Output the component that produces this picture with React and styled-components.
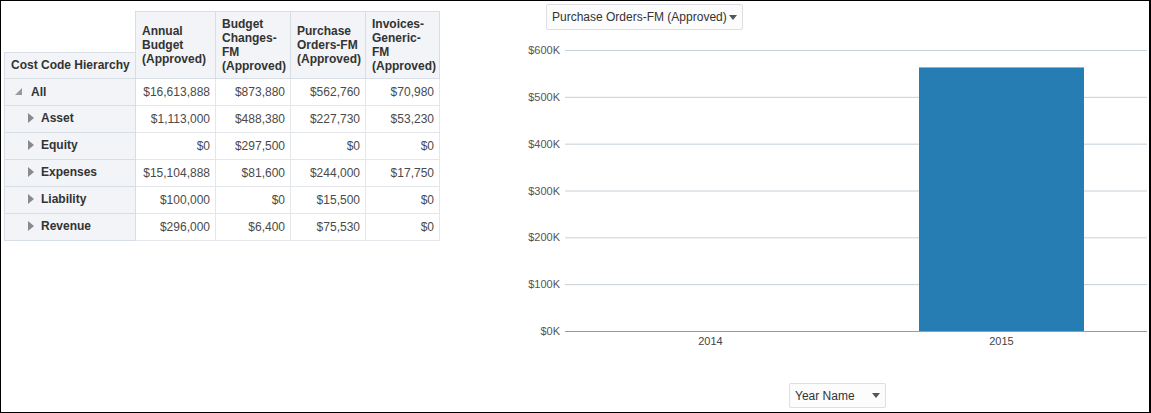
import React from "react";
import styled, { createGlobalStyle } from "styled-components";

const GlobalStyle = createGlobalStyle`
  body {
    margin: 0;
    font-family: "Liberation Sans", Arial, sans-serif;
    background: #fff;
  }
`;

const Frame = styled.div`
  box-sizing: border-box;
  width: 1151px;
  height: 413px;
  border: 1px solid #000;
  border-right-width: 2px;
  display: flex;
  flex-direction: row;
  overflow: hidden;
`;

const TablePanel = styled.div`
  flex: 0 0 489px;
  padding: 10px 0 0 3px;
  box-sizing: border-box;
`;

const Pivot = styled.table`
  border-collapse: collapse;
  table-layout: fixed;
  width: 436px;
  font-size: 12px;
  color: #333;
`;

const Corner = styled.td`
  border: none;
  padding: 0;
  height: 40px;
`;

const ColHeader = styled.th`
  background: #f2f4f8;
  border: 1px solid #d8dee5;
  text-align: left;
  vertical-align: middle;
  font-weight: bold;
  line-height: 14px;
  padding: 0 4px 0 6px;
`;

const HierHeader = styled.th`
  background: #f2f4f8;
  border: 1px solid #d8dee5;
  text-align: left;
  font-weight: bold;
  height: 25px;
  padding: 0 0 0 6px;
  white-space: nowrap;
`;

const RowHeader = styled.th`
  background: #f2f4f8;
  border: 1px solid #d8dee5;
  text-align: left;
  font-weight: bold;
  height: 26px;
  padding: 0 0 0 ${props => (props.level ? 23 : 10)}px;
`;

const Label = styled.span`
  display: inline-flex;
  align-items: center;
  gap: ${props => (props.expanded ? 9 : 7)}px;
`;

const Collapsed = styled.span`
  width: 0;
  height: 0;
  border-top: 5px solid transparent;
  border-bottom: 5px solid transparent;
  border-left: 6px solid #8a8a8a;
`;

const Expanded = styled.span`
  width: 0;
  height: 0;
  border-left: 7px solid transparent;
  border-bottom: 7px solid #9a9a9a;
`;

const Cell = styled.td`
  border: 1px solid #e3e7ec;
  text-align: right;
  padding: 0 5px 0 0;
  color: #4a4a4a;
`;

const ChartPanel = styled.div`
  flex: 1;
  min-width: 0;
  display: flex;
  flex-direction: column;
  padding-top: 3px;
`;

const Dropdown = styled.div`
  box-sizing: border-box;
  display: flex;
  align-items: center;
  justify-content: space-between;
  width: ${props => props.width}px;
  height: ${props => props.height}px;
  margin-left: ${props => props.offset}px;
  padding: 0 5px 0 5px;
  border: 1px solid #dcdfe3;
  border-radius: 2px;
  background: #fcfcfd;
  font-size: 12px;
  color: #333;
`;

const Caret = styled.span`
  width: 0;
  height: 0;
  border-left: 4px solid transparent;
  border-right: 4px solid transparent;
  border-top: 5px solid #555;
`;

const ChartSvg = styled.svg`
  display: block;
  font-family: "Liberation Sans", Arial, sans-serif;
`;

const BottomRow = styled.div`
  margin-top: 23px;
`;

const levels = [
  { name: "All", level: 0, values: ["$16,613,888", "$873,880", "$562,760", "$70,980"] },
  { name: "Asset", level: 1, values: ["$1,113,000", "$488,380", "$227,730", "$53,230"] },
  { name: "Equity", level: 1, values: ["$0", "$297,500", "$0", "$0"] },
  { name: "Expenses", level: 1, values: ["$15,104,888", "$81,600", "$244,000", "$17,750"] },
  { name: "Liability", level: 1, values: ["$100,000", "$0", "$15,500", "$0"] },
  { name: "Revenue", level: 1, values: ["$296,000", "$6,400", "$75,530", "$0"] }
];

const headers = [
  ["Annual", "Budget", "(Approved)"],
  ["Budget", "Changes-", "FM", "(Approved)"],
  ["Purchase", "Orders-FM", "(Approved)"],
  ["Invoices-", "Generic-", "FM", "(Approved)"]
];

function Chart() {
  const top = 20;
  const bottom = 301;
  const left = 75;
  const right = 657;
  const max = 600000;
  const ticks = [0, 100, 200, 300, 400, 500, 600];
  const data = [
    { year: "2014", value: 0 },
    { year: "2015", value: 562760 }
  ];
  const cat = (right - left) / data.length;
  const y = v => bottom - (v / max) * (bottom - top);

  return (
    <ChartSvg width="657" height="330">
      {ticks.map(t => (
        <g key={t}>
          <line
            x1={left}
            x2={right}
            y1={y(t * 1000) + 0.5}
            y2={y(t * 1000) + 0.5}
            stroke={t === 0 ? "#9a9a9a" : "#c6d0d8"}
            strokeWidth="1"
          />
          <text x={70} y={y(t * 1000) + 4} textAnchor="end" fontSize="11" fill="#555">
            ${t}K
          </text>
        </g>
      ))}
      {data.map((d, i) =>
        d.value > 0 ? (
          <rect
            key={d.year}
            x={left + i * cat + 63}
            y={y(d.value)}
            width={165}
            height={bottom - y(d.value)}
            fill="#267db3"
          />
        ) : null
      )}
      {data.map((d, i) => (
        <text
          key={d.year}
          x={left + i * cat + cat / 2}
          y={315}
          textAnchor="middle"
          fontSize="11"
          fill="#444"
        >
          {d.year}
        </text>
      ))}
    </ChartSvg>
  );
}

export default function App() {
  return (
    <>
      <GlobalStyle />
      <Frame>
        <TablePanel>
          <Pivot>
            <colgroup>
              <col style={{ width: 131 }} />
              <col style={{ width: 80 }} />
              <col style={{ width: 75 }} />
              <col style={{ width: 75 }} />
              <col style={{ width: 74 }} />
            </colgroup>
            <thead>
              <tr>
                <Corner />
                {headers.map((h, i) => (
                  <ColHeader key={i} rowSpan={2}>
                    {h.map((line, j) => (
                      <div key={j}>{line}</div>
                    ))}
                  </ColHeader>
                ))}
              </tr>
              <tr>
                <HierHeader>Cost Code Hierarchy</HierHeader>
              </tr>
            </thead>
            <tbody>
              {levels.map(row => (
                <tr key={row.name}>
                  <RowHeader level={row.level}>
                    <Label expanded={row.level === 0}>
                      {row.level === 0 ? <Expanded /> : <Collapsed />}
                      {row.name}
                    </Label>
                  </RowHeader>
                  {row.values.map((v, i) => (
                    <Cell key={i}>{v}</Cell>
                  ))}
                </tr>
              ))}
            </tbody>
          </Pivot>
        </TablePanel>
        <ChartPanel>
          <Dropdown width={197} height={26} offset={56}>
            Purchase Orders-FM (Approved)
            <Caret />
          </Dropdown>
          <Chart />
          <BottomRow>
            <Dropdown width={97} height={25} offset={299}>
              Year Name
              <Caret />
            </Dropdown>
          </BottomRow>
        </ChartPanel>
      </Frame>
    </>
  );
}
